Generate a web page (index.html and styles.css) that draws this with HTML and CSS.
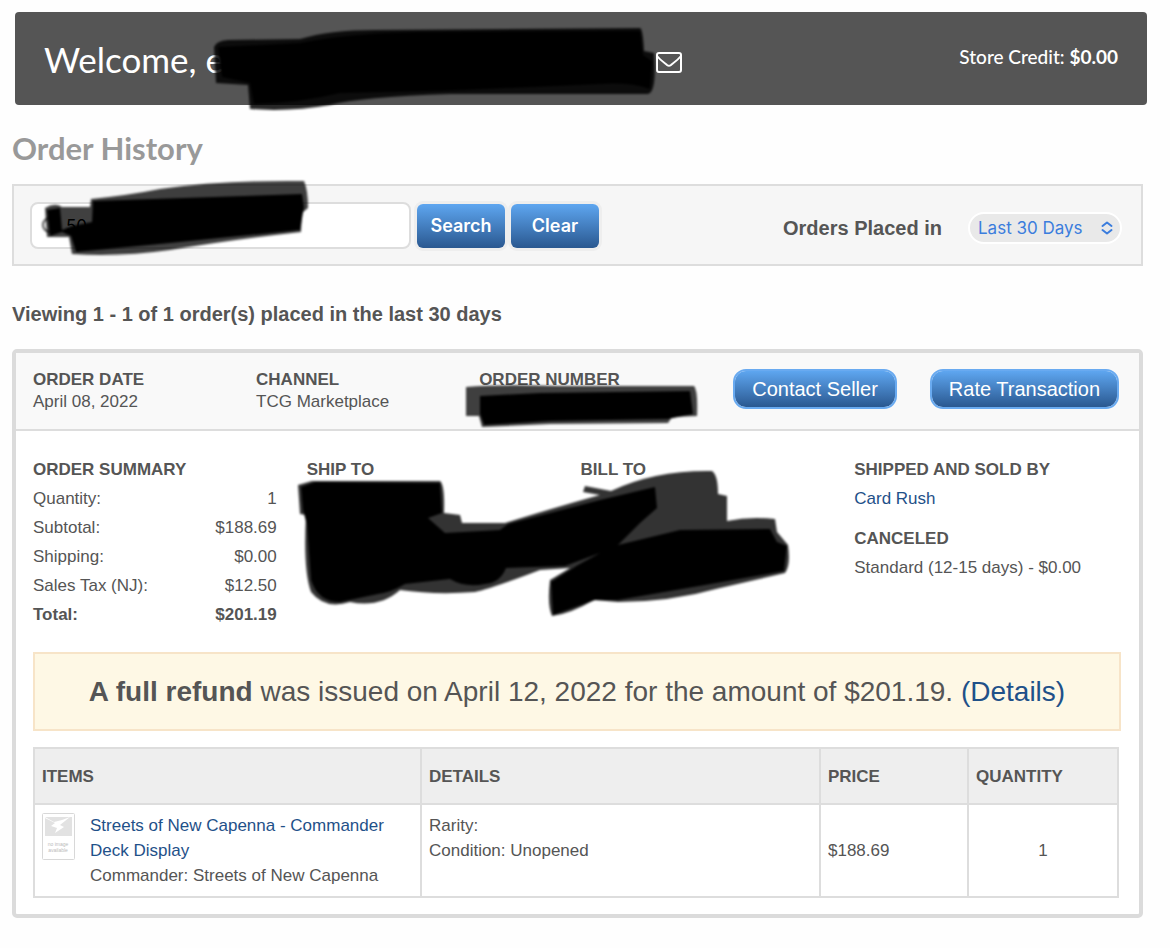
FILE: index.html
```html
<!DOCTYPE html>
<html lang="en">
<head>
  <meta charset="UTF-8">
  <title>Order History</title>
  <link rel="stylesheet" href="styles.css">
</head>
<body>
  <header class="welcome">
    <div class="welcome-name">
      <span>Welcome, e</span>
      <svg class="redact redact-name" viewBox="205 20 455 95" aria-hidden="true">
        <path opacity=".85" d="M214 46 Q216 40 228 39 L300 38 Q330 29 375 29 L640 27 Q643 28 644 50 L654 52 Q657 91 648 93 L450 93 Q360 96 330 104 Q290 111 250 108 L248 84 L216 82 Z"/>
        <path d="M218 46 L300 42 Q350 32 420 31 L640 30 L643 54 L652 60 L650 88 Q630 81 600 83 L440 90 L340 92 Q300 102 254 103 L250 82 L222 76 Z"/>
      </svg>
    </div>
    <a class="mail" href="#" aria-label="Messages">
      <svg width="26" height="21" viewBox="0 0 26 21" fill="none" stroke="#fff" stroke-width="2" stroke-linejoin="round">
        <rect x="1" y="1" width="24" height="19" rx="2"/>
        <path d="M1 4 C5 9 10 12 11 13 Q13 14.500 15 13 C16 12 21 9 25 4"/>
      </svg>
    </a>
    <div class="credit">Store Credit: <strong>$0.00</strong></div>
  </header>

  <h1>Order History</h1>

  <form class="filters">
    <div class="search">
      <input class="search-box" type="text" value="50" aria-label="Search orders">
      <svg class="redact redact-search" viewBox="35 178 280 82" aria-hidden="true">
        <circle cx="50" cy="225" r="7" fill="none" stroke="#555" stroke-width="2"/>
        <path opacity=".75" d="M45 208 Q55 202 62 207 L90 207 L91 199 Q130 195 160 189 Q220 180 304 181 Q308 190 308 208 L302 213 L301 232 Q230 240 170 250 Q120 257 72 254 L69 237 L47 237 Z"/>
        <path d="M47 210 L60 208 L62 230 L72 226 L92 222 L93 201 L302 194 L304 207 L300 230 L170 243 L76 252 L71 236 L62 232 L50 236 Z"/>
      </svg>
    </div>
    <button class="btn" type="submit">Search</button>
    <button class="btn" type="reset">Clear</button>
    <label class="period-label" for="period">Orders Placed in</label>
    <div class="period">
      <select id="period">
        <option>Last 30 Days</option>
        <option>Last 90 Days</option>
      </select>
      <svg class="arrows" width="12" height="14" viewBox="0 0 12 14" fill="none" stroke="#3b7ddd" stroke-width="2" stroke-linecap="round" stroke-linejoin="round">
        <path d="M1.500 5 L6 1.500 L10.500 5 M1.500 9 L6 12.500 L10.500 9"/>
      </svg>
    </div>
  </form>

  <p class="viewing">Viewing 1 - 1 of 1 order(s) placed in the last 30 days</p>

  <section class="order">
    <div class="order-head">
      <div class="info">
        <strong>ORDER DATE</strong>
        <div>April 08, 2022</div>
      </div>
      <div class="info">
        <strong>CHANNEL</strong>
        <div>TCG Marketplace</div>
      </div>
      <div class="info">
        <strong>ORDER NUMBER</strong>
        <svg class="redact redact-number" viewBox="460 380 240 50" aria-hidden="true">
          <path opacity=".75" d="M466 387 Q500 384 560 386 L694 386 Q698 390 697 416 L672 417 L668 423 L550 424 L482 427 L479 416 L466 416 Z"/>
          <path d="M480 396 L540 393 L690 391 L693 414 L668 419 L550 421 L484 425 L480 414 Z"/>
        </svg>
      </div>
      <div class="actions">
        <button class="btn-pill" type="button">Contact Seller</button>
        <button class="btn-pill" type="button">Rate Transaction</button>
      </div>
    </div>

    <div class="order-body">
      <div class="columns">
        <div>
          <h2>ORDER SUMMARY</h2>
          <dl class="summary">
            <div><dt>Quantity:</dt><dd>1</dd></div>
            <div><dt>Subtotal:</dt><dd>$188.69</dd></div>
            <div><dt>Shipping:</dt><dd>$0.00</dd></div>
            <div><dt>Sales Tax (NJ):</dt><dd>$12.50</dd></div>
            <div class="total"><dt>Total:</dt><dd>$201.19</dd></div>
          </dl>
        </div>
        <div>
          <h2>SHIP TO</h2>
        </div>
        <div>
          <h2>BILL TO</h2>
        </div>
        <div>
          <h2>SHIPPED AND SOLD BY</h2>
          <a href="#">Card Rush</a>
          <h2 class="status">CANCELED</h2>
          <div>Standard (12-15 days) - $0.00</div>
        </div>
        <svg class="redact redact-address" viewBox="290 460 510 165" aria-hidden="true">
          <path opacity=".8" d="M298 485 L312 481 L440 481 Q445 485 444 513 L460 515 L462 523 L505 523 Q560 506 600 495 L583 492 L585 486 L611 491 Q655 470 712 471 Q718 475 718 494 L727 496 L727 521 Q750 516 775 519 L777 532 L788 545 Q791 565 785 573 L720 588 Q670 602 618 602 L594 600 Q570 614 552 616 Q547 605 550 580 L570 568 L540 570 Q490 589 475 592 Q435 595 400 590 Q380 608 350 602 Q325 610 311 592 Q303 570 306 515 L300 514 Z"/>
          <path d="M301 487 L315 482 L440 483 L442 513 L428 518 L445 533 L500 530 L508 524 L600 500 L655 487 L657 508 L640 523 L618 545 L680 530 L770 529 L777 542 L787 546 L784 571 L705 585 L618 600 L595 600 L553 615 L551 582 L578 565 L600 553 L565 566 L506 568 Q500 583 485 584 Q465 588 450 579 L405 584 Q392 592 378 594 L340 602 Q318 602 311 580 L307 525 L303 510 Z"/>
        </svg>
      </div>

      <div class="refund"><strong>A full refund</strong> was issued on April 12, 2022 for the amount of $201.19. <a href="#">(Details)</a></div>

      <table class="items">
        <thead>
          <tr>
            <th>ITEMS</th>
            <th class="col-details">DETAILS</th>
            <th class="col-price">PRICE</th>
            <th class="col-qty">QUANTITY</th>
          </tr>
        </thead>
        <tbody>
          <tr>
            <td>
              <div class="item">
                <svg class="thumb" width="33" height="47" viewBox="0 0 33 47">
                  <rect x=".5" y=".5" width="32" height="46" rx="1" fill="#fff" stroke="#d8d8d8"/>
                  <rect x="3" y="4" width="27" height="19" fill="#e2e2e2"/>
                  <path d="M3 4 L12 9 L20 7 L28 4 L18 12 L22 14 L13 20 L15 15 L9 13 L13 10 L3 5 Z" fill="#fff"/>
                  <text class="thumb-text" x="16" y="33" text-anchor="middle">no image</text>
                  <text class="thumb-text" x="16" y="39" text-anchor="middle">available</text>
                </svg>
                <div>
                  <a href="#">Streets of New Capenna - Commander Deck Display</a>
                  <div>Commander: Streets of New Capenna</div>
                </div>
              </div>
            </td>
            <td class="details">Rarity:<br>Condition: Unopened</td>
            <td>$188.69</td>
            <td class="qty">1</td>
          </tr>
        </tbody>
      </table>
    </div>
  </section>
</body>
</html>
```
FILE: styles.css
```css
* {
  box-sizing: border-box;
}

body {
  margin: 0;
  padding: 12px 27px 31px 12px;
  background-color: #fefefe;
  color: #555;
  font-family: "Liberation Sans", Arial, sans-serif;
  font-size: 17px;
  line-height: 22px;
}

a {
  color: #1f5189;
  text-decoration: none;
}

h1, h2, p, dl, dd {
  margin: 0;
}

/* scribbled-out private details */
.redact {
  position: absolute;
  filter: blur(1px);
  pointer-events: none;
}

.welcome {
  display: flex;
  align-items: center;
  height: 93px;
  margin: 0 -4px 0 3px;
  padding: 0 29px;
  background-color: #555;
  border-radius: 4px;
  color: #fff;
  font-family: Lato, sans-serif;
}

.welcome-name {
  position: relative;
  width: 612px;
  font-size: 35px;
  line-height: 44px;
}

.redact-name {
  left: 161px;
  top: -16px;
  width: 455px;
  height: 95px;
}

.mail {
  display: flex;
  padding-top: 8px;
}

.credit {
  margin-left: auto;
  padding-bottom: 4px;
  font-size: 19px;
  font-weight: 500;
}

h1 {
  margin: 24px 0 16px;
  color: #999;
  font-family: Lato, sans-serif;
  font-size: 31px;
  line-height: 39px;
}

.filters {
  display: flex;
  align-items: center;
  gap: 6px;
  padding: 16px 19px 15px 16px;
  border: 2px solid #ddd;
  background-color: #f6f6f6;
}

.search {
  position: relative;
  width: 381px;
}

.search-box {
  display: block;
  width: 100%;
  height: 47px;
  padding: 0 34px;
  border: 2px solid #ddd;
  border-radius: 8px;
  background-color: #fff;
  font-family: Inter, sans-serif;
  font-size: 17px;
}

.redact-search {
  left: 5px;
  top: -24px;
  width: 280px;
  height: 82px;
}

.btn {
  width: 88px;
  height: 44px;
  padding: 0;
  border: none;
  border-radius: 6px;
  background: linear-gradient(#5ea6f0, #2a5890);
  box-shadow: 0 0 0 3px #eee;
  color: #fff;
  font-family: Inter, sans-serif;
  font-size: 18px;
  font-weight: 600;
}

.period-label {
  margin-left: auto;
  padding-top: 4px;
  font-size: 20px;
  font-weight: bold;
}

.period {
  position: relative;
  margin-left: 20px;
  padding-top: 4px;
}

.period select {
  display: block;
  width: 154px;
  height: 32px;
  padding: 0 8px;
  border: 2px solid #fff;
  border-radius: 16px;
  background-color: #e9e9e9;
  color: #3b7ddd;
  font-family: Inter, sans-serif;
  font-size: 17px;
  appearance: none;
}

.arrows {
  position: absolute;
  right: 9px;
  top: 13px;
  pointer-events: none;
}

.viewing {
  margin: 37px 0 23px;
  font-size: 20px;
  font-weight: bold;
  line-height: 23px;
}

.order {
  border: 4px solid #dbdbdb;
  border-radius: 5px;
  background-color: #fff;
}

.order-head {
  display: flex;
  padding: 16px 20px 16px 17px;
  border-bottom: 2px solid #ddd;
  background-color: #f9f9f9;
}

.info {
  position: relative;
  flex: 1;
  height: 44px;
}

.redact-number {
  left: -19px;
  top: 11px;
  width: 240px;
  height: 50px;
}

.actions {
  display: flex;
  gap: 33px;
  margin-left: 31px;
}

.btn-pill {
  height: 40px;
  padding: 0 17px;
  border: 2px solid #69aaf0;
  border-radius: 13px;
  background: linear-gradient(#5ea6f0, #2a5890) padding-box;
  color: #fff;
  font-family: "Liberation Sans", Arial, sans-serif;
  font-size: 20px;
}

.order-body {
  padding: 25px 18px 16px 17px;
}

.columns {
  position: relative;
  display: grid;
  grid-template-columns: repeat(4, 1fr);
  column-gap: 30px;
  margin-right: 23px;
  line-height: 29px;
}

h2 {
  font-size: 17px;
  line-height: 28px;
}

.status {
  margin-top: 12px;
}

.summary div {
  display: flex;
  justify-content: space-between;
}

.total {
  font-weight: bold;
}

.redact-address {
  left: 257px;
  top: 4px;
  width: 510px;
  height: 165px;
}

.refund {
  margin: 23px 0 16px;
  padding: 22px 0;
  border: 2px solid #f7e4c8;
  background-color: #fef8e5;
  font-size: 28px;
  line-height: 31px;
  text-align: center;
}

.items {
  width: calc(100% - 2px);
  border-collapse: collapse;
  table-layout: fixed;
  line-height: 25px;
}

.items th,
.items td {
  padding: 8px 7px;
  border: 2px solid #ddd;
  text-align: left;
}

.items th {
  height: 56px;
  background-color: #eee;
}

.col-details {
  width: 399px;
}

.col-price {
  width: 148px;
}

.col-qty {
  width: 150px;
}

.item {
  display: flex;
  gap: 15px;
}

.thumb {
  flex: none;
}

.thumb-text {
  fill: #bbb;
  font-size: 5px;
}

.items .details {
  vertical-align: top;
}

.items .qty {
  text-align: center;
}
```
